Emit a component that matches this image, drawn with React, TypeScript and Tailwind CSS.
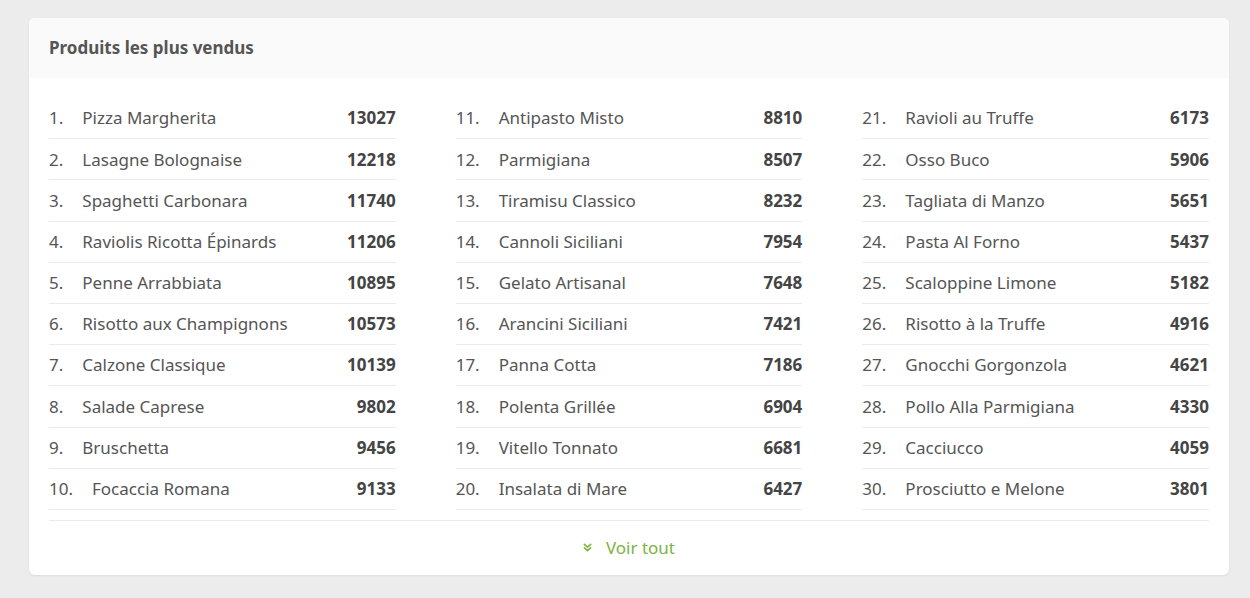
import React from 'react';

const products: [string, number][] = [
    ['Pizza Margherita', 13027],
    ['Lasagne Bolognaise', 12218],
    ['Spaghetti Carbonara', 11740],
    ['Raviolis Ricotta Épinards', 11206],
    ['Penne Arrabbiata', 10895],
    ['Risotto aux Champignons', 10573],
    ['Calzone Classique', 10139],
    ['Salade Caprese', 9802],
    ['Bruschetta', 9456],
    ['Focaccia Romana', 9133],
    ['Antipasto Misto', 8810],
    ['Parmigiana', 8507],
    ['Tiramisu Classico', 8232],
    ['Cannoli Siciliani', 7954],
    ['Gelato Artisanal', 7648],
    ['Arancini Siciliani', 7421],
    ['Panna Cotta', 7186],
    ['Polenta Grillée', 6904],
    ['Vitello Tonnato', 6681],
    ['Insalata di Mare', 6427],
    ['Ravioli au Truffe', 6173],
    ['Osso Buco', 5906],
    ['Tagliata di Manzo', 5651],
    ['Pasta Al Forno', 5437],
    ['Scaloppine Limone', 5182],
    ['Risotto à la Truffe', 4916],
    ['Gnocchi Gorgonzola', 4621],
    ['Pollo Alla Parmigiana', 4330],
    ['Cacciucco', 4059],
    ['Prosciutto e Melone', 3801],
];

function Row({ rank, name, qty }: { rank: number; name: string; qty: number }) {
    return (
        <li className="flex items-center justify-between h-[41.2px] border-b border-[#ebebeb]">
            <span className="flex items-center">
                <span className="mr-[19px]">{rank}.</span>
                <span>{name}</span>
            </span>
            <span className="font-bold text-[#444]">{qty}</span>
        </li>
    );
}

export default function App() {
    const columns = [0, 1, 2].map((c) => products.slice(c * 10, c * 10 + 10));

    return (
        <div
            className="min-h-[598px] bg-[#ececec] pt-[18px] pl-[29px] pr-[21px] text-[#555] text-[17px]"
            style={{ fontFamily: '"Noto Sans", "Open Sans", sans-serif' }}
        >
            <div className="bg-white rounded-md shadow-[0_1px_2px_rgba(0,0,0,0.08)] overflow-hidden">
                {/* en-tête */}
                <div className="h-[60px] bg-[#fafafa] flex items-center px-[20px]">
                    <h2 className="font-bold text-[17px] text-[#555]">Produits les plus vendus</h2>
                </div>

                {/* liste en trois colonnes */}
                <div className="px-[20px] pt-[20px]">
                    <div className="grid grid-cols-3 gap-x-[60px]">
                        {columns.map((col, ci) => (
                            <ul key={ci}>
                                {col.map(([name, qty], i) => (
                                    <Row key={name} rank={ci * 10 + i + 1} name={name} qty={qty} />
                                ))}
                            </ul>
                        ))}
                    </div>
                    <div className="mt-[10px] border-t border-[#ebebeb] h-[55px] flex items-center justify-center">
                        <a href="#" className="flex items-center gap-[14px] text-[#7cb342]">
                            <svg width="9" height="9" viewBox="0 0 10 10" fill="none" stroke="currentColor" strokeWidth="1.8" strokeLinecap="round" strokeLinejoin="round">
                                <path d="M1.5 1.5 L5 4.5 L8.5 1.5" />
                                <path d="M1.5 5.5 L5 8.5 L8.5 5.5" />
                            </svg>
                            <span>Voir tout</span>
                        </a>
                    </div>
                </div>
            </div>
        </div>
    );
}
